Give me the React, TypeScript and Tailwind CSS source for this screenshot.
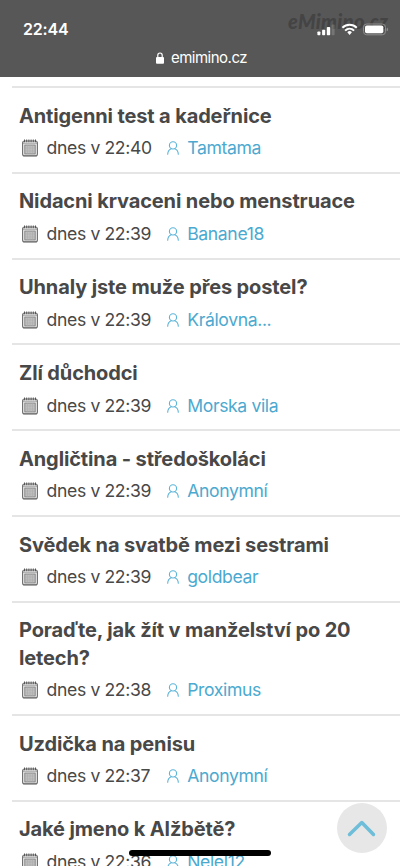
const topics = [
  { title: 'Antigenni test a kadeřnice', time: '22:40', user: 'Tamtama' },
  { title: 'Nidacni krvaceni nebo menstruace', time: '22:39', user: 'Banane18' },
  { title: 'Uhnaly jste muže přes postel?', time: '22:39', user: 'Královna...' },
  { title: 'Zlí důchodci', time: '22:39', user: 'Morska vila' },
  { title: 'Angličtina - středoškoláci', time: '22:39', user: 'Anonymní' },
  { title: 'Svědek na svatbě mezi sestrami', time: '22:39', user: 'goldbear' },
  { title: 'Poraďte, jak žít v manželství po 20 letech?', time: '22:38', user: 'Proximus' },
  { title: 'Uzdička na penisu', time: '22:37', user: 'Anonymní' },
  { title: 'Jaké jmeno k Alžbětě?', time: '22:36', user: 'Nelel12' },
];

function CalendarIcon() {
  return (
    <svg className="ml-[3px] h-[18px] w-4 shrink-0" viewBox="0 0 16 18" fill="none">
      <rect x="0.6" y="2" width="14.8" height="15" rx="2" fill="#f0f0f0" stroke="#6c6c6c" strokeWidth="1.1" />
      <path d="M1 4.2h14" stroke="#777" strokeWidth="0.7" />
      <path d="M2.5 .5v2.7M4.7 .5v2.7M6.9 .5v2.7M9.1 .5v2.7M11.3 .5v2.7M13.5 .5v2.7" stroke="#555" strokeWidth="1" />
      <rect x="2.8" y="6" width="10.4" height="9" fill="#bebebe" stroke="#777" strokeWidth="0.8" />
      <path d="M3 9h10M3 12h10M5.5 6v9M8 6v9M10.5 6v9" stroke="#a9a9a9" strokeWidth="0.5" />
      <path d="M1.5 16.7h13" stroke="#6c6c6c" strokeWidth="0.9" />
    </svg>
  );
}

function UserIcon() {
  return (
    <svg className="h-[14px] w-3 shrink-0" viewBox="0 0 12 14" fill="none" stroke="#5bb5d8" strokeWidth="1.1" strokeLinecap="round">
      <circle cx="6" cy="4.4" r="3.6" />
      <path d="M.7 13.2c.1-3 1.4-4.7 3.5-5.5M7.8 7.7c2.1.8 3.4 2.5 3.5 5.5" />
    </svg>
  );
}

function StatusIcons() {
  return (
    <svg className="h-[14px] w-[72px]" viewBox="0 0 72 14" fill="none">
      <g fill="#fff">
        <rect x="0.4" y="8.5" width="3" height="3.7" rx="0.8" />
        <rect x="5.1" y="6.8" width="3.1" height="5.4" rx="0.8" />
        <rect x="9.8" y="4" width="3.4" height="8.2" rx="0.8" />
        <rect x="14.6" y="1.6" width="3" height="10.6" rx="0.8" opacity="0.18" />
      </g>
      <path d="M25.4 4.8c4.1-4 10.3-4 14.4 0M28.1 7.6c2.6-2.5 6.4-2.5 9 0" stroke="#fff" strokeWidth="2" />
      <path d="M30.3 9.2a3.3 3.3 0 0 1 4.6 0l-2.3 2.7z" fill="#fff" />
      <rect x="46.5" y="1" width="22" height="10.8" rx="3.2" stroke="#8c8c8c" strokeWidth="1" />
      <rect x="48" y="2.5" width="18.3" height="7.8" rx="1.8" fill="#fff" />
      <path d="M69.7 4.5v3.8c.9-.3 1.4-1 1.4-1.9s-.5-1.6-1.4-1.9z" fill="#8c8c8c" />
    </svg>
  );
}

export default function App() {
  return (
    <div className="relative h-[866px] w-[400px] overflow-hidden bg-white font-['Inter','Liberation_Sans',sans-serif] text-[#484848]">
      <header className="relative h-[77px] bg-[#575757] text-white">
        <span className="absolute top-[9px] left-[288px] font-['Lato',sans-serif] text-[20px] leading-6 font-black tracking-[0.3px] text-[#444] italic">
          eMimino.cz
        </span>
        <div className="relative flex h-[46px] items-start justify-between pt-[20px] pr-[11px] pl-[23px]">
          <span className="text-[16px] leading-[19px] font-semibold tracking-[-0.2px]">22:44</span>
          <div className="pt-[3px]"><StatusIcons /></div>
        </div>
        <div className="flex items-center justify-center gap-[7px] pl-[3px] text-[15px] leading-[23px] tracking-[-0.5px]">
          <svg className="h-3 w-2" viewBox="0 0 8 12" fill="none">
            <path d="M1.8 5.5V3.2a2.2 2.2 0 0 1 4.4 0v2.3" stroke="#fff" strokeWidth="1.2" />
            <rect y="5" width="8" height="6.8" rx="1" fill="#fff" />
          </svg>
          <span>emimino.cz</span>
        </div>
      </header>

      <main className="pt-[9px] pl-3">
        {topics.map((topic) => (
          <article key={topic.title} className="border-t-2 border-[#e5e5e5] pt-[14.6px] pb-[10px] pl-[7px]">
            <h2 className="w-[345px] text-[20px] leading-[27.4px] font-bold tracking-[-0.13px]">{topic.title}</h2>
            <div className="mt-[4.8px] flex h-[27px] items-center text-[17.6px] leading-[27px] tracking-[-0.37px]">
              <CalendarIcon />
              <span className="ml-[8.6px] w-[120px] pb-[1.4px]">dnes v {topic.time}</span>
              <UserIcon />
              <a className="ml-[8.6px] pb-[1.4px] text-[#4ba9d0]">{topic.user}</a>
            </div>
          </article>
        ))}
      </main>

      <button aria-label="Nahoru" className="absolute top-[803px] left-[337px] flex size-[50px] items-center justify-center rounded-full bg-[#e7e7e7]">
        <svg className="size-[50px]" viewBox="0 0 50 50" fill="none">
          <path d="M12.5 31.5 24.8 19.5 36.5 31.5" stroke="#6ebdd9" strokeWidth="3.5" strokeLinecap="round" strokeLinejoin="round" />
        </svg>
      </button>
      <div className="absolute top-[850px] left-[129px] h-[6px] w-[142px] rounded-full bg-black" />
    </div>
  );
}
